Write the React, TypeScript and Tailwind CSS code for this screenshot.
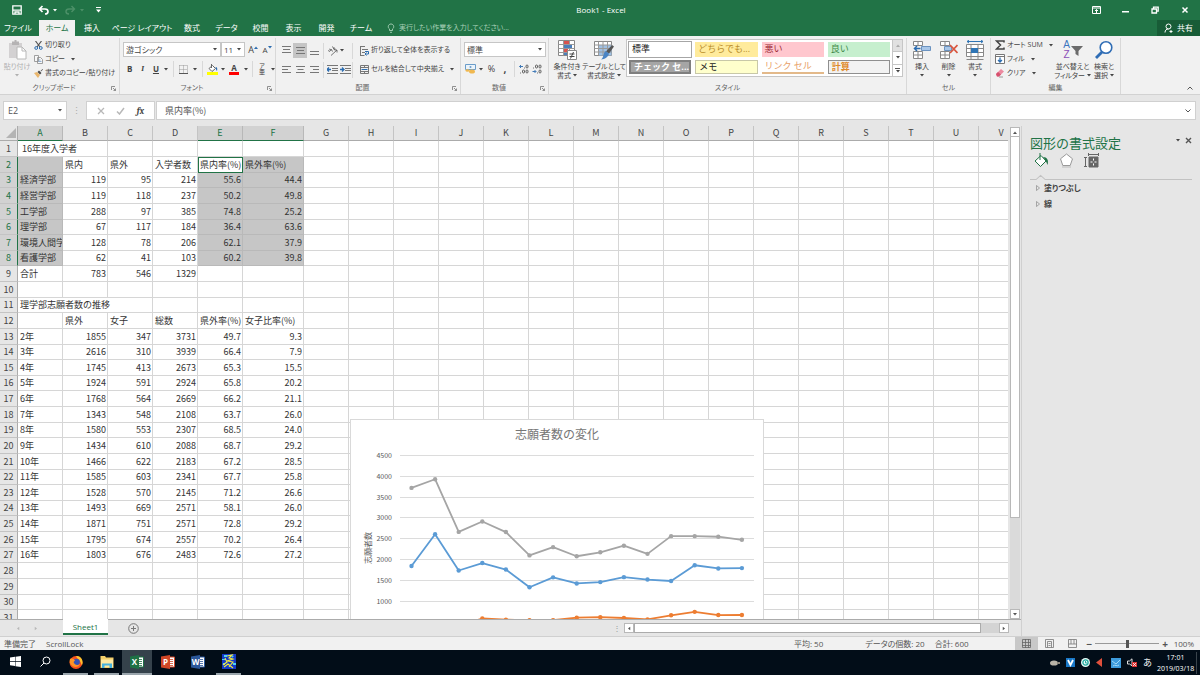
import type { ReactNode } from "react";
import clsx from "clsx";

type Cell = string | number;

type SheetRow = {
  cells: Cell[];
  // number of columns the first cell runs over
  span?: number;
};

const columns = "ABCDEFGHIJKLMNOPQRSTUV".split("");

const admissions: SheetRow[] = [
  { cells: ["16年度入学者"], span: 2 },
  { cells: ["", "県内", "県外", "入学者数", "県内率(%)", "県外率(%)"] },
  { cells: ["経済学部", 119, 95, 214, "55.6", "44.4"] },
  { cells: ["経営学部", 119, 118, 237, "50.2", "49.8"] },
  { cells: ["工学部", 288, 97, 385, "74.8", "25.2"] },
  { cells: ["理学部", 67, 117, 184, "36.4", "63.6"] },
  { cells: ["環境人間学部", 128, 78, 206, "62.1", "37.9"] },
  { cells: ["看護学部", 62, 41, 103, "60.2", "39.8"] },
  { cells: ["合計", 783, 546, 1329] },
  { cells: [] },
];

const applicants: [string, number, number, number, string, string][] = [
  ["2年", 1855, 347, 3731, "49.7", "9.3"],
  ["3年", 2616, 310, 3939, "66.4", "7.9"],
  ["4年", 1745, 413, 2673, "65.3", "15.5"],
  ["5年", 1924, 591, 2924, "65.8", "20.2"],
  ["6年", 1768, 564, 2669, "66.2", "21.1"],
  ["7年", 1343, 548, 2108, "63.7", "26.0"],
  ["8年", 1580, 553, 2307, "68.5", "24.0"],
  ["9年", 1434, 610, 2088, "68.7", "29.2"],
  ["10年", 1466, 622, 2183, "67.2", "28.5"],
  ["11年", 1585, 603, 2341, "67.7", "25.8"],
  ["12年", 1528, 570, 2145, "71.2", "26.6"],
  ["13年", 1493, 669, 2571, "58.1", "26.0"],
  ["14年", 1871, 751, 2571, "72.8", "29.2"],
  ["15年", 1795, 674, 2557, "70.2", "26.4"],
  ["16年", 1803, 676, 2483, "72.6", "27.2"],
];

const rows: SheetRow[] = [
  ...admissions,
  { cells: ["理学部志願者数の推移"], span: 3 },
  { cells: ["", "県外", "女子", "総数", "県外率(%)", "女子比率(%)"] },
  ...applicants.map((cells) => ({ cells })),
  { cells: [] },
  { cells: [] },
  { cells: [] },
  { cells: [] },
];

const Caret = ({ className = "" }: { className?: string }) => (
  <svg viewBox="0 0 4 3" className={clsx("h-[3px] w-1 shrink-0", className)}>
    <path d="M0 0h4L2 2.5z" fill="currentColor" />
  </svg>
);

const Divider = () => <span className="h-4 w-px shrink-0 bg-[#d8d8d8]" />;

const TitleBar = () => (
  <div className="flex h-5 items-center text-white">
    <div className="flex flex-1 items-center pl-3">
      <button aria-label="上書き保存">
        <svg viewBox="0 0 10 10" className="size-[10px]" fill="none" stroke="currentColor">
          <path d="M.8.8h8.4v8.4H.8zM1 5.2h8M3 9V7h4v2" strokeWidth="1.3" />
        </svg>
      </button>
      <button aria-label="元に戻す" className="ml-4 flex items-center gap-1">
        <svg viewBox="0 0 11 10" className="h-[10px] w-[11px]" fill="none" stroke="currentColor">
          <path d="M4.5 1 1.5 4l3 3M1.5 4H7c2 0 3 1 3 2.5S9 9 7 9" strokeWidth="1.7" />
        </svg>
        <Caret />
      </button>
      <button aria-label="やり直し" className="ml-2 flex items-center gap-1 text-[#4c9068]">
        <svg viewBox="0 0 11 10" className="h-[10px] w-[11px]" fill="none" stroke="currentColor">
          <path d="m6.5 1 3 3-3 3M9.5 4H4C2 4 1 5 1 6.5S2 9 4 9" strokeWidth="1.4" />
        </svg>
        <Caret />
      </button>
      <button aria-label="クイック アクセス ツール バーのユーザー設定" className="ml-3">
        <svg viewBox="0 0 5 6" className="h-[6px] w-[5px]" fill="currentColor">
          <path d="M0 0h5v1H0zM0 2.5h5L2.5 5.5z" />
        </svg>
      </button>
    </div>
    <h1 className="text-[8px] leading-3">Book1 - Excel</h1>
    <div className="flex flex-1 items-center justify-end gap-5 pr-[10px]">
      <button aria-label="リボンの表示オプション">
        <svg viewBox="0 0 9 8" className="h-2 w-[9px]" fill="none" stroke="currentColor">
          <path d="M.5.5h8v7h-8zM.5 2h8M4.5 7V3.5M3 5l1.500-1.500L6 5" />
        </svg>
      </button>
      <button aria-label="最小化" className="px-px">
        <svg viewBox="0 0 7 8" className="h-2 w-[7px]">
          <path d="M0 5h7v1.500H0z" fill="currentColor" />
        </svg>
      </button>
      <button aria-label="元に戻す (縮小)" className="px-px">
        <svg viewBox="0 0 8 8" className="size-2" fill="none" stroke="currentColor">
          <path d="M1 3h4.500v4H1zM2.500 3V1.200h4.700v4H5.500" strokeWidth="1.3" />
        </svg>
      </button>
      <button aria-label="閉じる" className="px-px">
        <svg viewBox="0 0 8 8" className="size-2" stroke="currentColor">
          <path d="m1.500 1.500 5 5m0-5-5 5" strokeWidth="1.5" />
        </svg>
      </button>
    </div>
  </div>
);

const MenuBar = () => (
  <nav className="flex h-4 items-stretch text-[8px] leading-4 text-white">
    <button className="w-9">ファイル</button>
    <button className="ml-[3px] w-[36px] bg-[#f1f1f1] text-[#217346]">ホーム</button>
    <button className="w-[34px]">挿入</button>
    <button className="w-[66px] whitespace-nowrap">ページ レイアウト</button>
    <button className="w-[34px]">数式</button>
    <button className="w-[35px]">データ</button>
    <button className="w-[33px]">校閲</button>
    <button className="w-[33px]">表示</button>
    <button className="w-[33px]">開発</button>
    <button className="w-9">チーム</button>
    <button className="ml-2 flex items-center gap-1 whitespace-nowrap text-[7px] text-[#a9d1b9]">
      <svg viewBox="0 0 8 10" className="h-[10px] w-2" fill="none" stroke="currentColor">
        <path d="M2.5 7.500V6C.3 4.500 1.200 1 4 1s3.700 3.500 1.500 5v1.500zM3 9.300h2" strokeWidth=".9" />
      </svg>
      実行したい作業を入力してください...
    </button>
    <button className="ml-auto flex w-[43px] items-center justify-center gap-1 bg-[#185c37]">
      <svg viewBox="0 0 9 10" className="h-[10px] w-[9px]" fill="none" stroke="currentColor">
        <circle cx="4.5" cy="3.5" r="2.5" />
        <path d="M1 9.500C1 7 2.500 6 4.500 6M5.500 8.500h3M7 7v3" />
      </svg>
      共有
    </button>
  </nav>
);

const Group = ({
  label,
  width,
  launcher = false,
  children,
}: {
  label: string;
  width: string;
  launcher?: boolean;
  children: ReactNode;
}) => (
  <section className={clsx("mt-[2px] flex shrink-0 flex-col border-r border-[#d8d8d8]", width)}>
    <div className="h-11">{children}</div>
    <footer className="flex h-3 items-center text-[7px] leading-3 text-[#666]">
      <span className="flex-1 text-center">{label}</span>
      {launcher && (
        <button aria-label={`${label}の設定`} className="w-[11px] pl-[3px]">
          <svg viewBox="0 0 5 5" className="size-[5px]" fill="none" stroke="#777">
            <path d="M.5 4V.5H4M2 2l2.500 2.500M4.500 2.500v2h-2" strokeWidth=".8" />
          </svg>
        </button>
      )}
    </footer>
  </section>
);

const SmallButton = ({ icon, label, caret }: { icon: ReactNode; label: string; caret?: boolean }) => (
  <button className="flex h-[14px] items-center gap-[2px] whitespace-nowrap">
    {icon}
    {label}
    {caret && <Caret className="ml-1" />}
  </button>
);

const BigButton = ({
  icon,
  lines,
  width,
  muted,
}: {
  icon: ReactNode;
  lines: string[];
  width: string;
  muted?: boolean;
}) => (
  <button className={clsx("flex flex-col items-center pt-[2px]", width, muted && "text-[#b0b0b0]")}>
    {icon}
    <span className="mt-[2px] whitespace-nowrap leading-[9px]">{lines[0]}</span>
    <span className="flex h-[9px] items-center gap-[2px] whitespace-nowrap leading-[9px]">
      {lines[1]}
      <Caret />
    </span>
  </button>
);

const ClipboardGroup = () => (
  <Group label="クリップボード" width="w-[120px]" launcher>
    <div className="flex gap-1">
      <BigButton
        width="ml-1 w-[26px]"
        muted
        lines={["貼り付け", ""]}
        icon={
          <svg viewBox="0 0 20 20" className="size-5">
            <path d="M2 3h13v15H2z" fill="#d3d1d2" />
            <path d="M5 3V1.500h2.500V0h2v1.500H12V5H5z" fill="#b5b3b4" />
            <path d="M10 7h5l4 4v8h-9z" fill="#fff" stroke="#b8b8b8" />
            <path d="M15 7v4h4" fill="none" stroke="#b8b8b8" />
          </svg>
        }
      />
      <div className="flex flex-col">
        <SmallButton
          label="切り取り"
          icon={
            <svg viewBox="0 0 9 9" className="size-[9px]" fill="none">
              <path d="M1.500 0 6 6M7.500 0 3 6" stroke="#555" strokeWidth="1.2" />
              <circle cx="2.2" cy="7" r="1.4" stroke="#2b6cb0" />
              <circle cx="6.8" cy="7" r="1.4" stroke="#2b6cb0" />
            </svg>
          }
        />
        <SmallButton
          label="コピー"
          caret
          icon={
            <svg viewBox="0 0 9 9" className="size-[9px]" fill="#f8f8f8" stroke="#8a8a8a" strokeWidth=".8">
              <path d="M.5.5h4v6h-4zM3.500 2.500h3l2 2v4h-5z" />
              <path d="M4.500 5h2M4.500 6.500h3" stroke="#7ba0c8" />
            </svg>
          }
        />
        <SmallButton
          label="書式のコピー/貼り付け"
          icon={
            <svg viewBox="0 0 9 9" className="size-[9px]">
              <path d="m0 4 3-1 3 3-2 3z" fill="#eab66c" />
              <path d="m3.500 3 1.500-1.500L7.500 4 6 5.500zM6.500 2 8.500 0l.5.5-2 2z" fill="#4a4a4a" />
            </svg>
          }
        />
      </div>
    </div>
  </Group>
);

const SelectBox = ({ label, value, width }: { label: string; value: string; width: string }) => (
  <div className={clsx("flex h-[15px] items-center border border-[#c6c6c6] bg-white pr-[3px]", width)}>
    <select
      aria-label={label}
      className="h-full min-w-0 flex-1 appearance-none bg-transparent pl-[2px] text-[8px] leading-3 outline-none"
    >
      <option>{value}</option>
    </select>
    <Caret />
  </div>
);

const FontGroup = () => (
  <Group label="フォント" width="w-[156px]" launcher>
    <div className="flex items-center pl-[3px] pt-1">
      <SelectBox label="フォント名" value="游ゴシック" width="w-[98px]" />
      <SelectBox label="フォント サイズ" value="11" width="w-6" />
      <button aria-label="フォント サイズの拡大" className="flex w-4 justify-center text-[9px] leading-3">
        A<Caret className="mt-[2px] rotate-180 text-[#2b6cb0]" />
      </button>
      <button aria-label="フォント サイズの縮小" className="flex w-3 justify-center text-[8px] leading-3">
        A<Caret className="mt-[2px] text-[#2b6cb0]" />
      </button>
    </div>
    <div className="flex h-6 items-center pl-[7px]">
      <button aria-label="太字" className="w-[6px] text-[8px] font-bold">B</button>
      <button aria-label="斜体" className="ml-2 w-[6px] font-serif text-[8px] font-bold italic">I</button>
      <button aria-label="下線" className="ml-2 mr-[5px] flex items-center gap-[5px] text-[8px] font-bold">
        <span className="underline">U</span>
        <Caret />
      </button>
      <Divider />
      <button aria-label="罫線" className="mx-[5px] flex items-center gap-[5px]">
        <svg viewBox="0 0 9 9" className="size-[9px]" fill="none" stroke="#999" strokeDasharray="1 1">
          <path d="M.5.5h8v8M.5.5v8M4.500.5v8M.5 4.500h8" />
          <path d="M0 8.500h9" stroke="#555" strokeDasharray="none" />
        </svg>
        <Caret />
      </button>
      <Divider />
      <button aria-label="塗りつぶしの色" className="ml-1 flex items-center gap-[3px]">
        <svg viewBox="0 0 11 11" className="size-[11px]">
          <path d="M2 4.500 5.500 1.500 8.500 4.500 5 7.500z" fill="#fff" stroke="#666" />
          <path d="M4.500 0v4" stroke="#666" />
          <path d="M8.500 3c2 0 2 2 1.500 4-1-1-1-2-1.500-4" fill="#2b6cb0" />
          <path d="M0 8h11v3H0z" fill="#ff0" />
        </svg>
        <Caret />
      </button>
      <button aria-label="フォントの色" className="mx-1 flex items-center gap-[5px]">
        <span className="w-[10px] border-b-[3px] border-[#f00] text-center text-[8px] font-bold leading-[9px]">A</span>
        <Caret />
      </button>
      <Divider />
      <button aria-label="ふりがな" className="ml-[6px] flex items-center gap-[6px]">
        <span className="flex flex-col text-center text-[6px] leading-[6px]">
          <span>ア</span>
          <span>亜</span>
        </span>
        <Caret />
      </button>
    </div>
  </Group>
);

const AlignIcon = ({ d }: { d: string }) => (
  <svg viewBox="0 0 9 9" className="size-[9px]" stroke="#777">
    <path d={d} />
  </svg>
);

const IndentIcon = ({ flip }: { flip?: boolean }) => (
  <svg viewBox="0 0 11 9" className="h-[9px] w-[11px]" fill="none" stroke="#777">
    <path d="M0 .5h11M5 3.500h6M5 5.500h6M0 8.500h11" />
    <path d={flip ? "M0 4.500h3.500M2 2.500l2 2-2 2" : "M4 4.500H.5M2 2.500l-2 2 2 2"} stroke="#2b6cb0" strokeWidth="1.3" />
  </svg>
);

const AlignmentGroup = () => (
  <Group label="配置" width="w-[185px]" launcher>
    <div className="flex h-[21px] items-end pl-[3px]">
      <div className="flex h-[17px] items-center">
        <button aria-label="上揃え" className="flex h-[15px] w-[14px] items-center justify-center">
          <AlignIcon d="M0 .5h9M1 3.500h7M0 6.500h9" />
        </button>
        <button aria-label="上下中央揃え" className="flex h-[15px] w-[14px] items-center justify-center bg-[#c5c5c5]">
          <AlignIcon d="M0 1.500h9M1 4.500h7M0 7.500h9" />
        </button>
        <button aria-label="下揃え" className="flex h-[15px] w-[14px] items-center justify-center">
          <AlignIcon d="M0 5.500h9M0 8.500h9" />
        </button>
        <span className="ml-[2px] h-4 w-px bg-[#d8d8d8]" />
        <button aria-label="方向" className="flex w-6 items-center gap-[2px] pl-1">
          <svg viewBox="0 0 10 10" className="size-[10px]" fill="none" stroke="#555">
            <path d="M1.200 3.500c1-1.300 2 .5 1 1.500s-2 0-1.300-.8M3 3l1.500 2.500M4.500.5l2 3.500M5.500 2.200c1.500-.8 2.200 1 1 1.800" strokeWidth=".9" />
            <path d="M3 9.500 9 4M9 6.500V4H6.500" strokeWidth=".8" />
          </svg>
          <Caret />
        </button>
        <span className="ml-1 mr-[7px] h-4 w-px bg-[#d8d8d8]" />
        <SmallButton
          label="折り返して全体を表示する"
          icon={
            <svg viewBox="0 0 9 10" className="h-[10px] w-[9px]" fill="none" stroke="#777">
              <path d="M.5 0v10M0 .5h5M2 3.500h6M2 6.500h3M.5 9.500h4" />
              <path d="M5 5.500h3.500V8H5M6.500 6.500 5 8l1.500 1.500" stroke="#2b6cb0" />
            </svg>
          }
        />
      </div>
    </div>
    <div className="flex h-[21px] items-center pl-[3px]">
      <button aria-label="左揃え" className="flex w-[14px] justify-center">
        <AlignIcon d="M0 1.500h9M0 4.500h6M0 7.500h9" />
      </button>
      <button aria-label="中央揃え" className="flex w-[14px] justify-center">
        <AlignIcon d="M0 1.500h9M1.500 4.500h6M0 7.500h9" />
      </button>
      <button aria-label="右揃え" className="flex w-[14px] justify-center">
        <AlignIcon d="M0 1.500h9M3 4.500h6M0 7.500h9" />
      </button>
      <span className="ml-[2px] mr-[3px] h-4 w-px bg-[#d8d8d8]" />
      <button aria-label="インデントを減らす"><IndentIcon /></button>
      <button aria-label="インデントを増やす" className="ml-[2px]"><IndentIcon flip /></button>
      <span className="ml-px mr-[7px] h-4 w-px bg-[#d8d8d8]" />
      <SmallButton
        label="セルを結合して中央揃え"
        caret
        icon={
          <svg viewBox="0 0 9 9" className="size-[9px]" fill="none" stroke="#777">
            <path d="M.5.5h8v8h-8zM.5 2.500h8M.5 6.500h8M4.500 0v2M4.500 7v2" />
            <path d="M1.500 4.500h6" stroke="#2b6cb0" />
          </svg>
        }
      />
    </div>
  </Group>
);

const NumberGroup = () => (
  <Group label="数値" width="w-[88px]" launcher>
    <div className="pl-[3px] pt-1">
      <SelectBox label="表示形式" value="標準" width="w-[82px]" />
    </div>
    <div className="flex h-6 items-center pl-1">
      <button aria-label="通貨表示形式" className="flex items-center gap-[3px]">
        <svg viewBox="0 0 11 10" className="h-[10px] w-[11px]" fill="none">
          <path d="M.5.5h10v5H.5z" fill="#eaf3fb" stroke="#6a9cc9" />
          <circle cx="5.5" cy="3" r="1" fill="#6a9cc9" />
          <ellipse cx="7" cy="7.5" rx="3" ry="2" fill="#f0b850" />
          <ellipse cx="2.5" cy="6.5" rx="2" ry="1.3" fill="#f0b850" />
        </svg>
        <Caret />
      </button>
      <button aria-label="パーセント スタイル" className="ml-1 w-[9px] text-[9px]">%</button>
      <button aria-label="桁区切りスタイル" className="ml-[7px] w-1 text-[10px] font-bold leading-3">,</button>
      <span className="ml-[7px] mr-1 h-4 w-px bg-[#d8d8d8]" />
      <button aria-label="小数点以下の表示桁数を増やす">
        <svg viewBox="0 0 10 10" className="size-[10px]" fill="none" stroke="#555" strokeWidth=".9">
          <path d="M4 2.500H.7M2 1 .5 2.500 2 4" stroke="#2b6cb0" />
          <path d="M5 4h.9" />
          <rect x="7" y="1" width="2" height="3" rx="1" />
          <path d="M1 9h.9" />
          <rect x="3.5" y="6" width="2" height="3" rx="1" />
          <rect x="7" y="6" width="2" height="3" rx="1" />
        </svg>
      </button>
      <button aria-label="小数点以下の表示桁数を減らす" className="ml-[3px]">
        <svg viewBox="0 0 10 10" className="size-[10px]" fill="none" stroke="#555" strokeWidth=".9">
          <path d="M1 4h.9" />
          <rect x="3.5" y="1" width="2" height="3" rx="1" />
          <rect x="7" y="1" width="2" height="3" rx="1" />
          <path d="M.5 7.500h3.300M2.500 6 4 7.500 2.500 9" stroke="#2b6cb0" />
          <path d="M5 9h.9" />
          <rect x="7" y="6" width="2" height="3" rx="1" />
        </svg>
      </button>
    </div>
  </Group>
);

const cellStyles = [
  { name: "標準", className: "bg-white text-[#222] outline outline-1 outline-[#a6a6a6]" },
  { name: "どちらでも...", className: "bg-[#ffeb9c] text-[#b98b2a]" },
  { name: "悪い", className: "bg-[#ffc7ce] text-[#9c2a36]" },
  { name: "良い", className: "bg-[#c6efce] text-[#3f8a4a]" },
  { name: "チェック セ...", className: "border-2 border-[#7f7f7f] bg-[#a5a5a5] font-bold text-white" },
  { name: "メモ", className: "border border-[#c8c8a8] bg-[#ffffcc] text-[#222]" },
  { name: "リンク セル", className: "border-b-2 border-[#e3b98a] bg-white text-[#e8a067]" },
  { name: "計算", className: "border border-[#8f8f8f] bg-[#f2f2f2] font-bold text-[#e08a2c]" },
];

const StylesGroup = () => (
  <Group label="スタイル" width="w-[358px]">
    <div className="flex">
      <BigButton
        width="w-[36px]"
        lines={["条件付き", "書式"]}
        icon={
          <svg viewBox="0 0 19 20" className="h-5 w-[19px]">
            <path d="M.5.5h16v15H.5z" fill="#fff" stroke="#888" />
            <path d="M.5 4.500h16M.5 8.500h16M.5 12.500h16M5.500.5v15M11.500.5v15" stroke="#999" />
            <path d="M6 1h5v3H6zM6 9h4v3H6z" fill="#d9534f" />
            <path d="M6 5h8v3H6zM6 13h3v2H6z" fill="#4a7ebb" />
            <path d="M9.500 10.500h9v9h-9z" fill="#fff" stroke="#888" />
            <path d="M11.500 14h5M11.500 16.500h5M15.500 12l-3 6.500" stroke="#444" />
          </svg>
        }
      />
      <BigButton
        width="w-[38px]"
        lines={["テーブルとして", "書式設定"]}
        icon={
          <svg viewBox="0 0 20 20" className="size-5">
            <path d="M.5 1.500h17v14H.5z" fill="#fff" stroke="#888" />
            <path d="M5 5h12.500v10.500H5z" fill="#9fc0e3" />
            <path d="M.5 5h17M.5 8.500h17M.5 12h17M4.500 1.500v14M9 1.500v14M13.500 1.500v14" stroke="#999" />
            <path d="m18 5 2 1.500-5 7-3-2z" fill="#555" />
            <path d="m11.500 11 3.500 2.500c-1 4-4 5.500-8 6 3-2 2-6 4.500-8.500" fill="#4a84c4" />
          </svg>
        }
      />
      <div className="ml-[3px] mt-px flex h-[38px] w-[277px] border border-[#c6c6c6] bg-white">
        <div className="grid flex-1 grid-cols-4 grid-rows-2 gap-x-1 gap-y-[3px] p-[2px] text-[9px]">
          {cellStyles.map((style) => (
            <button
              key={style.name}
              className={clsx(
                "flex items-center whitespace-nowrap px-[3px] leading-3 [font-feature-settings:normal]",
                style.className,
              )}
            >
              {style.name}
            </button>
          ))}
        </div>
        <div className="flex w-[10px] flex-col divide-y divide-[#c6c6c6] border-l border-[#c6c6c6]">
          <button aria-label="前の行" className="flex flex-1 items-center justify-center bg-[#e1e1e1] text-[#aaa]">
            <Caret className="rotate-180" />
          </button>
          <button aria-label="次の行" className="flex flex-1 items-center justify-center"><Caret /></button>
          <button aria-label="その他" className="flex flex-1 flex-col items-center justify-center gap-px">
            <span className="h-px w-[5px] bg-[#555]" />
            <Caret />
          </button>
        </div>
      </div>
    </div>
  </Group>
);

const CellsGroup = () => (
  <Group label="セル" width="w-[84px]">
    <div className="flex pl-[2px]">
      <BigButton
        width="w-[26px]"
        lines={["挿入", ""]}
        icon={
          <svg viewBox="0 0 18 20" className="h-5 w-[18px]" fill="#fff" stroke="#888">
            <path d="M.5 1.500h9v4h-9zM5 1.500v4M.5 11.500h9v7h-9zM5 11.500v7M.5 15h9" />
            <path d="M8.500 6.500h9v4h-9z" fill="#a9c7e8" stroke="#6b93c0" />
            <path d="M7.500 8.500h-6M4 6 1.500 8.500 4 11" fill="none" stroke="#2b6cb0" strokeWidth="1.5" />
          </svg>
        }
      />
      <BigButton
        width="w-[27px]"
        lines={["削除", ""]}
        icon={
          <svg viewBox="0 0 18 20" className="h-5 w-[18px]" fill="#fff" stroke="#888">
            <path d="M.5 1.500h9v4h-9zM5 1.500v4M.5 11.500h9v7h-9zM5 11.500v7M.5 15h9" />
            <path d="M4.500 6.500h7v4h-7z" fill="#a9c7e8" stroke="#6b93c0" />
            <path d="m10 5 7.500 8m0-8L10 13" stroke="#d9573f" strokeWidth="1.8" />
          </svg>
        }
      />
      <BigButton
        width="w-[26px]"
        lines={["書式", ""]}
        icon={
          <svg viewBox="0 0 18 20" className="h-5 w-[18px]" fill="#fff" stroke="#888">
            <path d="M.5 4.500h17v12H.5zM.5 8.500h17M.5 12.500h17M5 4.500v15M12 4.500v15M.5 19.500h17" />
            <path d="M5 8h7v5H5z" fill="#2f75b5" stroke="none" />
            <path d="M1 1.500h16M3 0 1 1.500 3 3M15 0l2 1.500L15 3" fill="none" stroke="#2f75b5" />
          </svg>
        }
      />
    </div>
  </Group>
);

const EditingGroup = () => (
  <Group label="編集" width="w-[130px]">
    <div className="flex pl-1">
      <div className="flex w-[60px] flex-col">
        <SmallButton
          label="オート SUM"
          caret
          icon={
            <svg viewBox="0 0 10 10" className="size-[10px] shrink-0" fill="none" stroke="#444">
              <path d="M9 2.500V1H1.500L5.500 5l-4 4H9V7.500" strokeWidth="1.5" />
            </svg>
          }
        />
        <SmallButton
          label="フィル"
          caret
          icon={
            <svg viewBox="0 0 10 10" className="size-[10px] shrink-0" fill="#fff" stroke="#777">
              <path d="M.5.5h9v9h-9zM.5 2.500h9" />
              <path d="M5 3.500V8M3 6l2 2 2-2" fill="none" stroke="#2b6cb0" strokeWidth="1.3" />
            </svg>
          }
        />
        <SmallButton
          label="クリア"
          caret
          icon={
            <svg viewBox="0 0 10 10" className="size-[10px] shrink-0">
              <path d="m1 6 5-5 3 2.500-5 5H2z" fill="#ec8aa0" />
              <path d="m1 6 2-2 3 2.500-2 2H2z" fill="#d6506e" />
              <path d="M4 9h4" stroke="#999" />
            </svg>
          }
        />
      </div>
      <BigButton
        width="w-[35px]"
        lines={["並べ替えと", "フィルター"]}
        icon={
          <span className="flex h-5 w-5 items-center">
            <span className="flex w-2 flex-col font-['Liberation_Sans',sans-serif] text-[10px] leading-[10px]">
              <span className="text-[#3a76c0]">A</span>
              <span className="text-[#8b4fb8]">Z</span>
            </span>
            <svg viewBox="0 0 12 12" className="size-3" fill="#6b6b6b">
              <path d="M0 2h12L7.500 7v5l-3-2V7z" />
            </svg>
          </span>
        }
      />
      <BigButton
        width="w-7"
        lines={["検索と", "選択"]}
        icon={
          <svg viewBox="0 0 20 20" className="size-5" fill="none" stroke="#2f6db5">
            <circle cx="12" cy="7.5" r="5.8" fill="#fff" strokeWidth="1.6" />
            <path d="m8 12-6 6" strokeWidth="2.8" />
          </svg>
        }
      />
    </div>
  </Group>
);

const Ribbon = () => (
  <div className="flex h-[59px] overflow-hidden border-b border-[#d2d2d2] bg-[#f1f1f1] text-[7px] text-[#444]">
    <ClipboardGroup />
    <FontGroup />
    <AlignmentGroup />
    <NumberGroup />
    <StylesGroup />
    <CellsGroup />
    <EditingGroup />
    <button aria-label="リボンを折りたたむ" className="mb-1 ml-auto mr-[7px] self-end">
      <svg viewBox="0 0 6 4" className="h-1 w-[6px]" fill="none" stroke="#555">
        <path d="m.5 3.500 2.500-2.500 2.500 2.500" />
      </svg>
    </button>
  </div>
);

const FormulaBar = () => (
  <div className="flex h-[31px] items-center pl-[3px] pr-1 text-[9px] text-[#555]">
    <div className="flex h-[19px] w-16 items-center border border-[#d0d0d0] bg-white pr-1">
      <input aria-label="名前ボックス" defaultValue="E2" className="min-w-0 flex-1 bg-transparent pl-1 text-[9px] outline-none" />
      <Caret />
    </div>
    <span className="w-[19px] text-center text-[#aaa]">⋮</span>
    <div className="flex h-[19px] w-[69px] items-center justify-around border border-[#d0d0d0] bg-white px-1">
      <button aria-label="キャンセル">
        <svg viewBox="0 0 8 8" className="size-2" stroke="#b8b8b8">
          <path d="m1 1 6 6m0-6L1 7" strokeWidth="1.3" />
        </svg>
      </button>
      <button aria-label="入力">
        <svg viewBox="0 0 9 8" className="h-2 w-[9px]" fill="none" stroke="#b8b8b8">
          <path d="m1 4.500 2.500 2.500L8 1" strokeWidth="1.5" />
        </svg>
      </button>
      <button aria-label="関数の挿入" className="font-serif text-[9px] font-bold italic leading-3 text-[#444]">fx</button>
    </div>
    <div className="ml-px flex h-[19px] flex-1 items-center border border-[#d0d0d0] bg-white pr-1">
      <input
        aria-label="数式バー"
        defaultValue="県内率(%)"
        className="min-w-0 flex-1 bg-transparent pl-2 font-['Noto_Sans_CJK_JP',sans-serif] text-[9px] outline-none [font-feature-settings:normal]"
      />
      <svg viewBox="0 0 6 4" className="h-1 w-[6px]" fill="none" stroke="#555">
        <path d="M.5.5 3 3 5.500.5" />
      </svg>
    </div>
  </div>
);

const isSelected = (row: number, col: number) =>
  row >= 2 && row <= 8 && (col === 0 || col === 4 || col === 5);

const SheetTable = () => (
  <table className="w-px table-fixed border-separate border-spacing-0 font-['Noto_Sans_CJK_JP',sans-serif] text-[9px] leading-[14px] text-[#333] [font-feature-settings:normal]">
    <colgroup>
      <col className="w-[18px]" />
      {columns.map((name) => (
        <col key={name} className={name === "F" ? "w-[61px]" : "w-[45px]"} />
      ))}
    </colgroup>
    <thead>
      <tr className="h-[15px]">
        <th aria-label="すべて選択" className="border-b border-r border-[#ababab] bg-[#e6e6e6] p-0">
          <svg viewBox="0 0 10 10" className="ml-auto mr-px size-[10px]">
            <path d="M10 0v10H0z" fill="#b4b4b4" />
          </svg>
        </th>
        {columns.map((name, col) => (
          <th
            key={name}
            className={clsx(
              "border-b border-r p-0 font-normal",
              isSelected(2, col)
                ? "border-b-[#217346] border-r-[#b8b8b8] bg-[#d2d2d2] text-[#217346]"
                : "border-b-[#ababab] border-r-[#c4c4c4] bg-[#e6e6e6] text-[#444]",
            )}
          >
            {name}
          </th>
        ))}
      </tr>
    </thead>
    <tbody>
      {rows.map((row, index) => {
        const number = index + 1;
        const marked = number >= 2 && number <= 8;
        const span = row.span ?? 1;
        return (
          <tr key={number} className={[2, 5, 7].includes(index % 8) ? "h-[15px]" : "h-4"}>
            <th
              className={clsx(
                "border-b border-r border-b-[#c4c4c4] p-0 font-normal",
                marked
                  ? "border-r-[#217346] bg-[#d2d2d2] text-[#217346]"
                  : "border-r-[#ababab] bg-[#e6e6e6] text-[#444]",
              )}
            >
              {number}
            </th>
            {columns.map((name, col) => {
              if (col > 0 && col < span) return null;
              const value = row.cells[col] ?? "";
              const numeric = value !== "" && col > 0 && !isNaN(Number(value));
              const active = number === 2 && col === 4;
              return (
                <td
                  key={name}
                  colSpan={col === 0 ? span : 1}
                  className={clsx(
                    "overflow-hidden whitespace-nowrap border-b border-r p-0",
                    numeric ? "pr-px text-right" : number === 1 ? "pl-1" : "pl-[2px]",
                    active && "border-[#d6d6d6] bg-white outline outline-1 -outline-offset-1 outline-[#217346]",
                    !active && isSelected(number, col) && "border-[#b9b9b9] bg-[#c6c6c6]",
                    !active && !isSelected(number, col) && "border-[#d6d6d6]",
                  )}
                >
                  {value}
                </td>
              );
            })}
          </tr>
        );
      })}
    </tbody>
  </table>
);

const series = [
  { name: "総数", color: "#a5a5a5", values: applicants.map((row) => row[3]) },
  { name: "県外", color: "#5b9bd5", values: applicants.map((row) => row[1]) },
  { name: "女子", color: "#ed7d31", values: applicants.map((row) => row[2]) },
];

const ticks = [4500, 4000, 3500, 3000, 2500, 2000, 1500, 1000];

const chartX = (index: number) => 60.5 + index * 23.6;
const chartY = (value: number) => 181.5 - (value - 1000) * 0.0416;

const ApplicantsChart = () => (
  <svg
    viewBox="0 0 412 238"
    role="img"
    aria-label="志願者数の変化"
    className="absolute left-[350px] top-[293px] h-[240px] w-[414px] border border-[#d9d9d9] bg-white font-['Noto_Sans_CJK_JP',sans-serif] [font-feature-settings:normal]"
  >
    <text x="206" y="19" fontSize="12" textAnchor="middle" fill="#767676">
      志願者数の変化
    </text>
    <text x="20" y="128" fontSize="8" textAnchor="middle" fill="#595959" transform="rotate(-90 20 128)">
      志願者数
    </text>
    {ticks.map((tick) => (
      <g key={tick}>
        <path d={`M49 ${Math.round(chartY(tick)) - 0.5}H403`} stroke="#dcdcdc" />
        <text x="41" y={chartY(tick) + 2} fontSize="7" textAnchor="end" fill="#595959">
          {tick}
        </text>
      </g>
    ))}
    {series.map(({ name, color, values }) => (
      <g key={name} fill={color}>
        <polyline
          points={values.map((value, i) => `${chartX(i)},${chartY(value)}`).join(" ")}
          fill="none"
          stroke={color}
          strokeWidth="1.8"
          strokeLinejoin="round"
        />
        {values.map((value, i) => (
          <circle key={i} cx={chartX(i)} cy={chartY(value)} r="2.2" />
        ))}
      </g>
    ))}
  </svg>
);

const VerticalScrollbar = () => (
  <div className="mr-px mt-px flex w-[10px] shrink-0 flex-col bg-[#dadada] text-[#555]">
    <button aria-label="上へスクロール" className="flex h-[10px] items-center justify-center border border-[#b8b8b8] bg-white">
      <Caret className="rotate-180" />
    </button>
    <div className="flex-[25] border border-t-0 border-[#b8b8b8] bg-white" />
    <div className="flex-[6]" />
    <button aria-label="下へスクロール" className="flex h-[10px] items-center justify-center border border-[#b8b8b8] bg-white">
      <Caret />
    </button>
  </div>
);

const SheetTabs = () => (
  <div className="flex h-[17px] shrink-0 border-t border-[#ababab] pr-3 text-[8px]">
    <div className="flex w-[63px] items-center gap-[14px] pl-4 text-[#b8b8b8]">
      <button aria-label="前のシート"><Caret className="rotate-90" /></button>
      <button aria-label="次のシート"><Caret className="-rotate-90" /></button>
    </div>
    <button className="-mt-px mb-px w-[45px] border-b-2 border-[#217346] bg-white leading-[15px] text-[#217346]">
      Sheet1
    </button>
    <button aria-label="新しいシート" className="ml-5">
      <svg viewBox="0 0 11 11" className="size-[11px]" fill="none" stroke="#777">
        <circle cx="5.5" cy="5.5" r="4.8" />
        <path d="M5.500 3v5M3 5.500h5" />
      </svg>
    </button>
    <div className="ml-auto flex w-[396px] items-center text-[#555]">
      <span className="w-[11px] leading-3 text-[#999]">⋮</span>
      <button aria-label="左へスクロール" className="flex size-[10px] items-center justify-center border border-[#b8b8b8] bg-white">
        <Caret className="rotate-90" />
      </button>
      <div className="flex h-[10px] flex-1 bg-[#d4d4d4]">
        <div className="w-[95%] border border-[#ababab] bg-white" />
      </div>
      <button aria-label="右へスクロール" className="flex size-[10px] items-center justify-center border border-[#b8b8b8] bg-white">
        <Caret className="-rotate-90" />
      </button>
    </div>
  </div>
);

const FormatPane = () => (
  <aside className="w-[179px] shrink-0 border-l border-[#d0d0d0] px-2 pt-2 text-[#444]">
    <div className="flex items-start justify-between">
      <h2 className="text-[13px] leading-[18px] text-[#217346] [font-feature-settings:normal]">図形の書式設定</h2>
      <div className="mt-[3px] flex items-center gap-1">
        <button aria-label="作業ウィンドウのオプション" className="p-px"><Caret /></button>
        <button aria-label="閉じる">
          <svg viewBox="0 0 7 7" className="size-[7px]" stroke="#555">
            <path d="m1 1 5 5m0-5L1 6" strokeWidth="1.4" />
          </svg>
        </button>
      </div>
    </div>
    <div className="mt-px flex items-center gap-[10px] pl-1">
      <button aria-label="塗りつぶしと線">
        <svg viewBox="0 0 15 15" className="size-[15px]">
          <path d="M1 8 7 2.500 12 8l-5.500 5.500z" fill="#fff" stroke="#217346" />
          <path d="M6 0v7" stroke="#217346" />
          <path d="M9 4c4 0 6 3 4.500 8-1-3-2-5-4.500-8" fill="#217346" />
        </svg>
      </button>
      <button aria-label="効果">
        <svg viewBox="0 0 15 15" className="size-[15px]">
          <path d="m7.500 1 6 4.800-2.300 6.700H3.800L1.500 5.800z" fill="#fff" stroke="#999" />
          <path d="M3 14h9" stroke="#bbb" />
        </svg>
      </button>
      <button aria-label="サイズとプロパティ">
        <svg viewBox="0 0 15 15" className="size-[15px]" fill="none" stroke="#666">
          <path d="M4.500 1.500h10M4.500 0v3M14.500 0v3M1.500 4v10M0 4.500h3M0 13.500h3" />
          <path d="M5 4h9v10H5z" fill="#666" />
          <path d="M9.500 5.500v2M9.500 10.500v2M6.500 9h2M10.500 9h2" stroke="#fff" />
        </svg>
      </button>
    </div>
    <svg viewBox="0 0 160 6" preserveAspectRatio="none" className="mt-[6px] h-[6px] w-full" fill="none" stroke="#c2c2c2">
      <path d="M0 5.500h6l4.500-4 4.500 4h145" />
    </svg>
    <div className="flex flex-col text-[8px] font-bold leading-4">
      {["塗りつぶし", "線"].map((label) => (
        <button key={label} className="flex items-center gap-1 pl-[6px]">
          <svg viewBox="0 0 4 6" className="h-[6px] w-1" fill="none" stroke="#888">
            <path d="m.5.5 3 2.500-3 2.500z" strokeWidth=".7" />
          </svg>
          {label}
        </button>
      ))}
    </div>
  </aside>
);

const StatusBar = () => (
  <footer className="flex h-[14px] shrink-0 items-center border-t border-[#d0d0d0] bg-[#f1f1f1] pl-1 text-[8px] leading-3 text-[#555]">
    <span>準備完了</span>
    <span className="ml-[10px]">ScrollLock</span>
    <span className="ml-auto">平均: 50</span>
    <span className="ml-[42px]">データの個数: 20</span>
    <span className="ml-[10px]">合計: 600</span>
    <div className="ml-[46px] flex h-full w-[69px] items-center">
      <button aria-label="標準" className="flex h-full w-[23px] items-center justify-center bg-[#c8c8c8]">
        <svg viewBox="0 0 9 9" className="size-[9px]" fill="none" stroke="#666">
          <path d="M.5.5h8v8h-8zM3.500 0v9M6.500 0v9M0 3.500h9M0 6.500h9" strokeWidth=".8" />
        </svg>
      </button>
      <button aria-label="ページ レイアウト" className="flex h-full w-[23px] items-center justify-center">
        <svg viewBox="0 0 9 9" className="size-[9px]" fill="none" stroke="#777">
          <path d="M.5.5h8v8h-8zM2.500 2.500h4v6M2.500 2.500v6M3.500 4.500h2M3.500 6.500h2" strokeWidth=".8" />
        </svg>
      </button>
      <button aria-label="改ページ プレビュー" className="flex h-full w-[23px] items-center justify-center">
        <svg viewBox="0 0 9 9" className="size-[9px]" fill="none" stroke="#777">
          <path d="M.5.5h8v8h-8zM3 .5V5h3V.5M.5 5H3M6 5h2.500" strokeWidth=".8" />
        </svg>
      </button>
    </div>
    <button aria-label="縮小" className="ml-[3px] text-[10px] font-bold">−</button>
    <input
      type="range"
      aria-label="ズーム"
      defaultValue="50"
      className="mx-[3px] h-px w-16 appearance-none bg-[#999] [&::-webkit-slider-thumb]:h-2 [&::-webkit-slider-thumb]:w-[3px] [&::-webkit-slider-thumb]:appearance-none [&::-webkit-slider-thumb]:bg-[#555]"
    />
    <button aria-label="拡大" className="text-[10px] font-bold">+</button>
    <span className="w-[32px] pr-[6px] text-right">100%</span>
  </footer>
);

const OfficeIcon = ({ letter, color }: { letter: string; color: string }) => (
  <svg viewBox="0 0 14 14" className="size-[14px]">
    <path d="M7 2h6.500v10H7z" fill="#fff" stroke={color} />
    <path d="M9 4.500h3M9 6.500h3M9 8.500h3M9 10.500h3" stroke={color} strokeWidth=".8" />
    <path d="M0 1.500 9 0v14L0 12.500z" fill={color} />
    <text x="4.5" y="10" fontSize="8" fontWeight="700" textAnchor="middle" fill="#fff">{letter}</text>
  </svg>
);

const apps = [
  {
    name: "スタート",
    icon: (
      <svg viewBox="0 0 11 11" className="size-[11px]" fill="#fff">
        <path d="m0 1.500 5-.7V5H0zM5.500.7 11 0v5H5.500zM0 5.700h5V10l-5-.7zM5.500 5.700H11V11l-5.500-.8z" />
      </svg>
    ),
  },
  {
    name: "検索",
    icon: (
      <svg viewBox="0 0 11 11" className="size-[11px]" fill="none" stroke="#fff">
        <circle cx="6.5" cy="4.5" r="3.5" />
        <path d="M4 7 .5 10.500" />
      </svg>
    ),
  },
  {
    name: "Firefox",
    open: true,
    icon: (
      <svg viewBox="0 0 14 14" className="size-[14px]">
        <circle cx="7" cy="7.5" r="6.5" fill="#f5501e" />
        <path d="M7 1c5-1 8 5 6 9-1-1-1-2-1.500-3C10 4 8 4 7 1" fill="#ffc22e" />
        <circle cx="7.5" cy="7" r="3.3" fill="#3652b5" />
        <path d="M1 4c2-1 4 0 5 1.500L4.500 7c1 3 4 4 6.500 2-1 3-5 4-7.500 2S0 7 1 4" fill="#ff9425" />
      </svg>
    ),
  },
  {
    name: "エクスプローラー",
    open: true,
    icon: (
      <svg viewBox="0 0 14 12" className="h-3 w-[14px]">
        <path d="M.5 0H5l1 1.500h7.500V12H.5z" fill="#f3cf6b" />
        <path d="M1 3.500h12V11H1z" fill="#fde9a4" />
        <path d="M2 12V7.500h10V12H9.500V9.500h-5V12z" fill="#45b2de" />
      </svg>
    ),
  },
  { name: "Excel", open: true, current: true, icon: <OfficeIcon letter="X" color="#1e7145" /> },
  { name: "PowerPoint", icon: <OfficeIcon letter="P" color="#d04727" /> },
  { name: "Word", icon: <OfficeIcon letter="W" color="#2b579a" /> },
  {
    name: "秀丸",
    open: true,
    icon: (
      <svg viewBox="0 0 14 15" className="h-[15px] w-[14px]">
        <path d="M0 0h14v15H0z" fill="#1438c8" />
        <path d="M2 1h3v2H2zM9 1l3 1-2 2zM0 5h4v1H0zM11 9h3v2h-3zM1 9h2v2H1z" fill="#4fd0ef" />
        <path d="m5 2 5-1-3 3 4 1-6 2M3 4l2 4-4 3M6 7l5 1-4 5M2 13l4-3 5 4" fill="none" stroke="#f5ec3d" strokeWidth="1.1" />
      </svg>
    ),
  },
];

const TrayIcons = () => (
  <div className="flex items-center gap-[6px]">
    <svg viewBox="0 0 10 6" className="h-[6px] w-[10px]">
      <ellipse cx="4" cy="3" rx="4" ry="2.6" fill="#b9b3a8" />
      <path d="M7 2h3v2H7z" fill="#8d877c" />
    </svg>
    <svg viewBox="0 0 9 9" className="size-[9px]">
      <path d="M0 0h9v9H0z" fill="#1978c8" />
      <path d="m2 2 2.500 5L7 2" fill="none" stroke="#fff" strokeWidth="1.8" />
    </svg>
    <svg viewBox="0 0 9 9" className="size-[9px]">
      <circle cx="4.5" cy="4.5" r="4.5" fill="#e9fbf8" />
      <circle cx="4.5" cy="4.5" r="2.6" fill="none" stroke="#25aaa0" strokeWidth="1.3" />
      <path d="M4.500 3v2H6" fill="none" stroke="#25aaa0" />
    </svg>
    <svg viewBox="0 0 7 9" className="h-[9px] w-[7px]">
      <path d="M0 4.500 6 0v9z" fill="#e0503c" />
    </svg>
    <svg viewBox="0 0 10 10" className="ml-[2px] size-[10px]">
      <path d="M0 0h10v10H0z" fill="#3d9bdc" />
      <path d="m1 3 4 3 4-4M2 8c2-2 4 1 6-1" fill="none" stroke="#a3d9f7" />
    </svg>
    <svg viewBox="0 0 10 9" className="h-[9px] w-[10px]">
      <path d="M.5 3h2L5 .8v7L2.500 6h-2z" fill="none" stroke="#ddd" />
      <path d="M5 4h5v5H5z" fill="#d33" />
      <path d="m6 5 3 3m0-3L6 8" stroke="#fff" strokeWidth=".8" />
    </svg>
    <span className="text-[9px] leading-3">あ</span>
  </div>
);

const Taskbar = () => (
  <div className="flex h-[25px] shrink-0 justify-between bg-[#020d18] text-white">
    <div className="flex">
      {apps.map((app) => (
        <button
          key={app.name}
          aria-label={app.name}
          className={clsx(
            "flex items-center justify-center border-b-2",
            app.open ? "border-[#9aa5ac]" : "border-transparent",
            app.current ? "w-[30px] bg-[#35424b]" : app.open ? "mx-[3px] w-[25px]" : "w-[30px]",
            app.current && "mr-px",
          )}
        >
          {app.icon}
        </button>
      ))}
    </div>
    <div className="flex items-center gap-[5px] pr-[3px]">
      <TrayIcons />
      <div className="w-[40px] border-r border-[#3a444c] pr-[2px] text-center text-[7px] leading-[11px]">
        <p>17:01</p>
        <p>2019/03/18</p>
      </div>
    </div>
  </div>
);

export default function App() {
  return (
    <div className="flex h-screen flex-col overflow-hidden bg-[#e6e6e6] font-['Open_Sans','Noto_Sans_CJK_JP',sans-serif] [font-feature-settings:'palt']">
      <header className="shrink-0">
        <div className="bg-[#217346]">
          <TitleBar />
          <MenuBar />
        </div>
        <Ribbon />
        <FormulaBar />
      </header>
      <main className="flex min-h-0 flex-1">
        <div className="flex min-w-0 flex-1 flex-col">
          <div className="flex min-h-0 flex-1 gap-[2px]">
            <div className="relative min-w-0 flex-1 overflow-hidden bg-white">
              <SheetTable />
              <ApplicantsChart />
            </div>
            <VerticalScrollbar />
          </div>
          <SheetTabs />
        </div>
        <FormatPane />
      </main>
      <StatusBar />
      <Taskbar />
    </div>
  );
}
